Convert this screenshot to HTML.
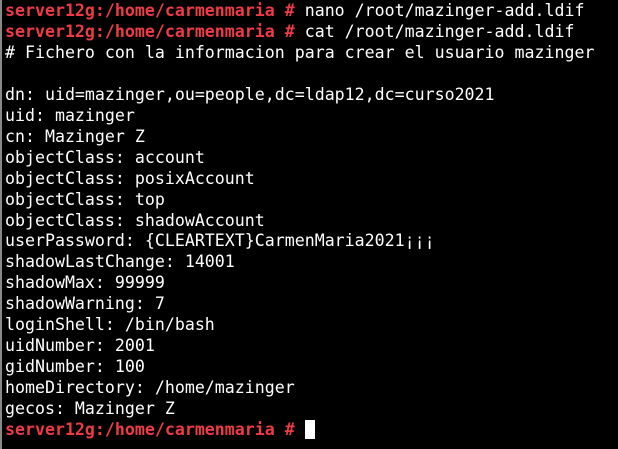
<!DOCTYPE html>
<html><head><style>
html,body{margin:0;padding:0;background:#000;width:618px;height:449px;overflow:hidden}
body{border-left:2px solid #888;box-sizing:border-box}
pre{margin:0;position:absolute;left:5px;top:1px;font-family:"DejaVu Sans Mono",monospace;font-size:16.6px;line-height:20.95px;color:#fff}
.r{color:#ee3b45;font-weight:bold}
.c{display:inline-block;width:10px;height:19px;background:#fff;vertical-align:-4px}
</style></head><body><pre><span class="r">server12g:/home/carmenmaria #</span> nano /root/mazinger-add.ldif
<span class="r">server12g:/home/carmenmaria #</span> cat /root/mazinger-add.ldif
# Fichero con la informacion para crear el usuario mazinger

dn: uid=mazinger,ou=people,dc=ldap12,dc=curso2021
uid: mazinger
cn: Mazinger Z
objectClass: account
objectClass: posixAccount
objectClass: top
objectClass: shadowAccount
userPassword: {CLEARTEXT}CarmenMaria2021¡¡¡
shadowLastChange: 14001
shadowMax: 99999
shadowWarning: 7
loginShell: /bin/bash
uidNumber: 2001
gidNumber: 100
homeDirectory: /home/mazinger
gecos: Mazinger Z
<span class="r">server12g:/home/carmenmaria #</span> <span class="c"></span></pre></body></html>
